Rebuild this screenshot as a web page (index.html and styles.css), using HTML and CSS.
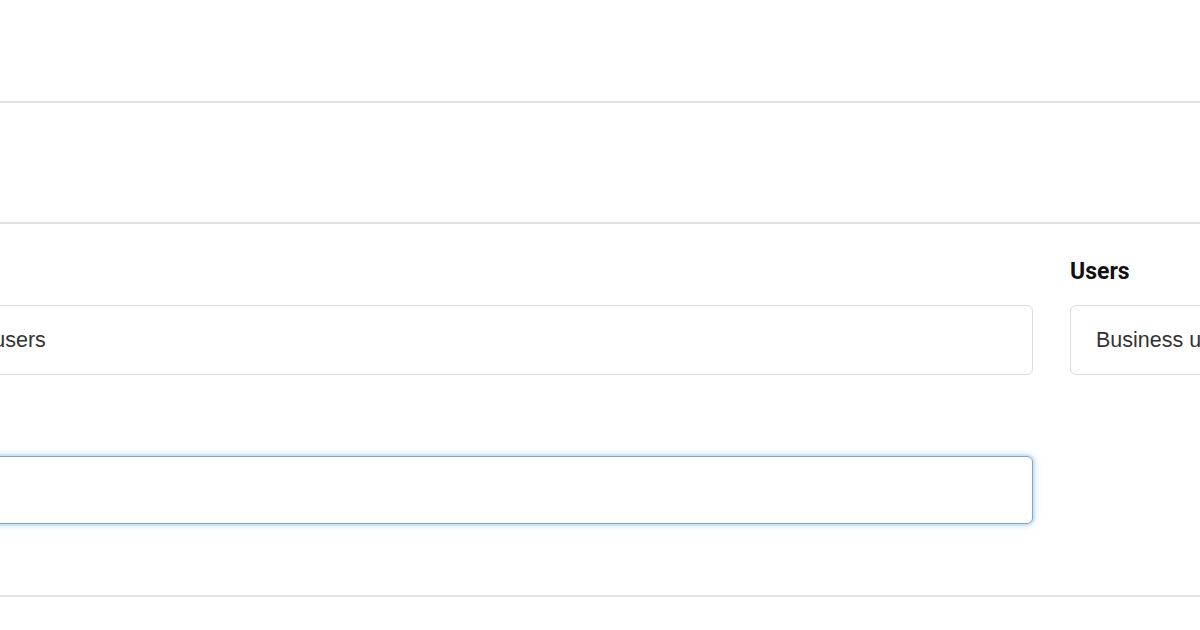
FILE: index.html
```html
<!DOCTYPE html>
<html>
<head>
<meta charset="utf-8">
<link rel="stylesheet" href="styles.css">
</head>
<body>
<div class="page">
  <div class="band band-top"></div>
  <div class="band band-mid"></div>
  <div class="form">
    <div class="row">
      <div class="field wide">
        <label class="lbl">Group</label>
        <div class="input">Business users</div>
      </div>
      <div class="field narrow">
        <label class="lbl">Users</label>
        <div class="input">Business users</div>
      </div>
    </div>
    <div class="row row2">
      <div class="field wide">
        <label class="lbl">Note</label>
        <div class="input focus"></div>
      </div>
    </div>
  </div>
</div>
</body>
</html>
```

FILE: styles.css
```css
html, body {
  margin: 0;
  padding: 0;
  background: #ffffff;
  overflow: hidden;
}
body {
  width: 1200px;
  height: 630px;
  font-family: "Liberation Sans", Arial, sans-serif;
  color: #333;
}
.page {
  margin-left: -126px;
  width: 1600px;
}
.band {
  border-bottom: 2px solid #e2e2e2;
  box-sizing: border-box;
}
.band-top { height: 103px; }
.band-mid { height: 121px; }
.form {
  padding-top: 35px;
  height: 373px;
  box-sizing: border-box;
  border-bottom: 2px solid #e2e2e2;
}
.row {
  display: flex;
  gap: 37px;
}
.row2 {
  margin-top: 35px;
}
.field {
  display: flex;
  flex-direction: column;
}
.wide { width: 1159px; }
.narrow { width: 400px; }
.lbl {
  font-family: Roboto, "Liberation Sans", sans-serif;
  font-weight: 700;
  font-size: 23px;
  line-height: 26px;
  color: #111;
  height: 26px;
  margin-bottom: 20px;
}
.wide .lbl { visibility: hidden; }
.input {
  box-sizing: border-box;
  height: 70px;
  border: 1px solid #dcdcdc;
  border-radius: 6px;
  padding: 0 24px 0 25px;
  display: flex;
  align-items: center;
  font-size: 21.5px;
  color: #333;
  background: #fff;
}
.input.focus {
  height: 68px;
  border: 1px solid #7fa6c6;
  box-shadow: 0 0 0 2px rgba(170, 210, 240, 0.35), 0 0 9px rgba(120, 180, 230, 0.55);
}
```
